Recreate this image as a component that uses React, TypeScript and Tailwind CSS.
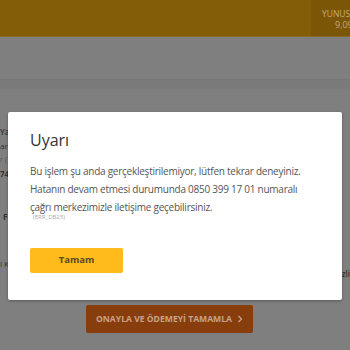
import React from "react";

export default function App() {
  const font = { fontFamily: '"Open Sans", "Noto Sans", sans-serif' };
  return (
    <div className="relative w-[350px] h-[350px] overflow-hidden bg-[#7f7f7f]" style={font}>
      {/* header */}
      <div className="flex h-[37px] bg-[#835d08] border-b border-[#8a6a2a]">
        <div className="flex-1" />
        <div className="w-[39px] bg-[#7b5606] flex flex-col items-start pl-[11px] pt-[8px] leading-[11px] text-[8.5px] text-[#c2ab78] whitespace-nowrap">
          <span>YUNUS</span>
          <span className="pl-[13px] text-[9px]">9,09</span>
        </div>
      </div>
      <div className="h-[42px]" />
      <div className="h-[10px] bg-[#7a7a7a] border-t border-[#777]" />
      {/* peeking content */}
      <div className="flex flex-col pt-[36px] text-[8px] text-[#333] leading-[14px]">
        <span className="font-semibold">Yap</span>
        <span>arı</span>
        <span className="text-[7px] text-[#555]">r (</span>
        <span className="font-bold">74</span>
        <span className="mt-[29px] font-bold pl-[3px]">F</span>
        <div className="mt-[33px] flex justify-between">
          <span>l K</span>
          <span className="mt-[10px] font-semibold">zli</span>
        </div>
      </div>
      {/* bottom button */}
      <div className="absolute left-[86px] top-[305px] w-[167px] h-[28px] rounded-[2px] bg-[#883e0c] flex items-center justify-center gap-[5px] text-[8.6px] font-bold text-[#c9a189]">
        <span>ONAYLA VE ÖDEMEYİ TAMAMLA</span>
        <svg width="6" height="8" viewBox="0 0 6 8" fill="none">
          <path d="M1.5 1 L4.5 4 L1.5 7" stroke="#c9a189" strokeWidth="1.3" />
        </svg>
      </div>
      {/* modal */}
      <div className="absolute left-[8px] top-[112px] w-[334px] h-[188px] bg-white rounded-[2px] shadow-[0_1px_3px_rgba(0,0,0,0.3)] pl-[22px] pt-[17px]">
        <div className="text-[16px] text-[#333] leading-[22px]">Uyarı</div>
        <div className="mt-[11px] text-[10px] tracking-[-0.25px] leading-[18px] text-[#555]">
          <div>Bu işlem şu anda gerçekleştirilemiyor, lütfen tekrar deneyiniz.</div>
          <div>Hatanın devam etmesi durumunda 0850 399 17 01 numaralı</div>
          <div>çağrı merkezimizle iletişime geçebilirsiniz.</div>
        </div>
        <div className="pl-[3px] -mt-[3px] text-[6px] leading-[8px] text-[#aaa]">(ERR_DB23)</div>
        <button className="mt-[27px] w-[93px] h-[25px] rounded-[2px] bg-[#ffbb1c] text-[9.5px] font-bold text-[#5a4620] flex items-center justify-center">
          Tamam
        </button>
      </div>
    </div>
  );
}
